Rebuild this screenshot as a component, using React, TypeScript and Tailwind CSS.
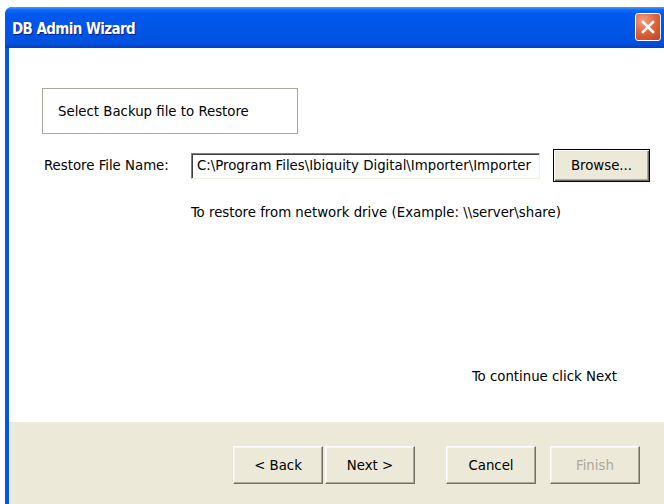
import React from "react";

const uiFont = "font-['DejaVu_Sans_Condensed','Liberation_Sans',sans-serif]";

function WizardButton({ label, disabled, className }: { label: string; disabled?: boolean; className?: string }) {
    return (
        <button
            disabled={disabled}
            className={`h-[38px] w-[90px] border border-t-white border-l-white border-r-[#716f64] border-b-[#716f64] bg-[#ece9d8] text-[14.8px] shadow-[inset_-1px_-1px_0_#aca899,inset_1px_1px_0_#f6f5ef] ${disabled ? "text-[#aca899]" : "text-black"} ${className ?? ""}`}
        >
            {label}
        </button>
    );
}

export default function App() {
    return (
        <div className={`h-[504px] w-[664px] overflow-hidden bg-white pl-[5px] pt-[7px] ${uiFont}`}>
            <div className="flex h-full flex-col overflow-hidden rounded-tl-[7px] bg-[#0055ea]">
                {/* Title bar */}
                <div className="flex h-[41px] shrink-0 items-start justify-between bg-[linear-gradient(to_bottom,#4a9dff_0%,#1169f7_7%,#0058ee_18%,#0055e5_55%,#0051de_88%,#0040c4_100%)] pl-[7px] pr-[3px]">
                    <span className="mt-[11px] text-[15px] font-bold tracking-[-0.6px] text-white [text-shadow:1px_1px_0_#0a1f8f]">
                        DB Admin Wizard
                    </span>
                    <div className="mt-[6px] flex h-[28px] w-[26px] items-center justify-center rounded-[3px] border border-white bg-[radial-gradient(circle_at_30%_25%,#f0a184_0%,#e0663f_45%,#c4401c_100%)]">
                        <svg width="16" height="16" viewBox="0 0 16 16">
                            <path d="M3 3 L13 13 M13 3 L3 13" stroke="white" strokeWidth="2.6" strokeLinecap="square" />
                        </svg>
                    </div>
                </div>

                {/* Client area */}
                <div className="ml-[4px] flex flex-1 flex-col">
                    <div className="flex flex-1 flex-col bg-white text-[14.8px] text-black">
                        <div className="ml-[33px] mt-[40px] flex h-[46px] w-[256px] items-center border border-[#aca899] pl-[15px]">
                            Select Backup file to Restore
                        </div>

                        <div className="mt-[15px] flex items-center">
                            <span className="ml-[35px] w-[147px]">Restore File Name:</span>
                            <div className="flex h-[26px] w-[349px] items-center overflow-hidden whitespace-nowrap border border-t-[#808080] border-l-[#808080] border-r-[#f1efe2] border-b-[#f1efe2] pl-[5px] shadow-[inset_1px_1px_0_#404040]">
                                C:\Program Files\Ibiquity Digital\Importer\Importer
                            </div>
                            <button className="ml-[13px] h-[33px] w-[97px] border border-black bg-[#ece9d8] text-[14.8px] shadow-[inset_1px_1px_0_#ffffff,inset_-1px_-1px_0_#716f64,inset_-2px_-2px_0_#aca899]">
                                Browse...
                            </button>
                        </div>

                        <div className="ml-[182px] mt-[19px]">To restore from network drive (Example: \\server\share)</div>

                        <div className="mt-auto mb-[35px] pr-[47px] text-right">To continue click Next</div>
                    </div>

                    {/* Footer */}
                    <div className="flex h-[82px] shrink-0 items-start justify-end bg-[#ece9d8] pr-[24px] pt-[24px]">
                        <WizardButton label="< Back" />
                        <WizardButton label="Next >" className="ml-[2px]" />
                        <WizardButton label="Cancel" className="ml-[31px]" />
                        <WizardButton label="Finish" disabled className="ml-[14px]" />
                    </div>
                </div>
            </div>
        </div>
    );
}
